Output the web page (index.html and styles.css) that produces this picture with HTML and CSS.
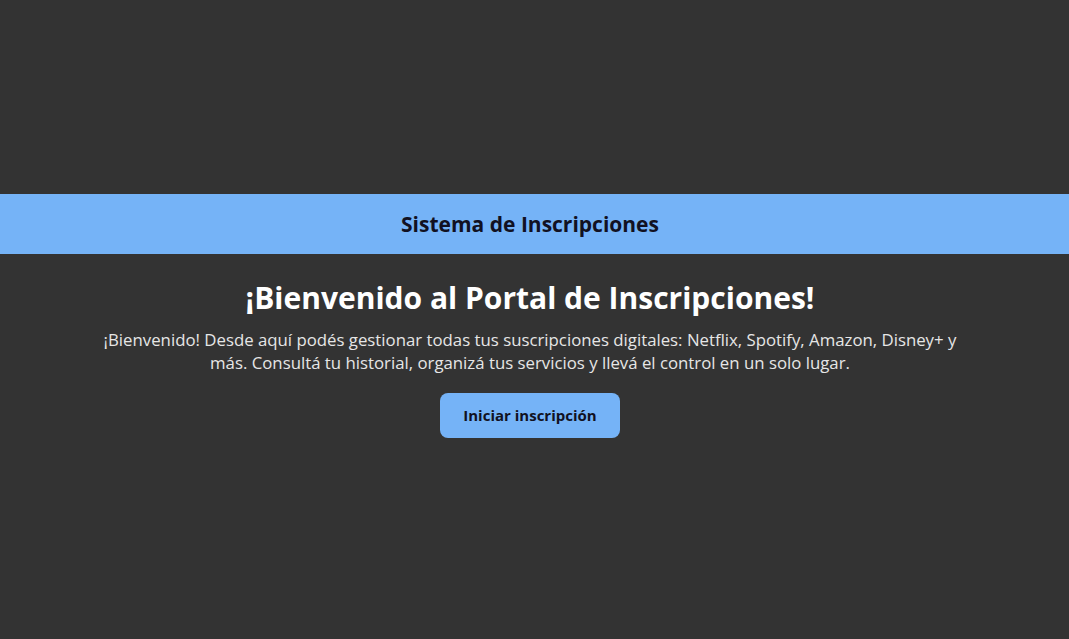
FILE: index.html
```html
<!DOCTYPE html>
<html lang="es">
<head>
<meta charset="utf-8">
<title>Sistema de Inscripciones</title>
<link rel="stylesheet" href="styles.css">
</head>
<body>
<div class="page">
  <header class="topbar">
    <h2 class="topbar-title">Sistema de Inscripciones</h2>
  </header>
  <main class="hero">
    <h1 class="hero-title">¡Bienvenido al Portal de Inscripciones!</h1>
    <p class="hero-text">¡Bienvenido! Desde aquí podés gestionar todas tus suscripciones digitales: Netflix, Spotify, Amazon, Disney+ y más. Consultá tu historial, organizá tus servicios y llevá el control en un solo lugar.</p>
    <button class="hero-button" type="button">Iniciar inscripción</button>
  </main>
</div>
</body>
</html>
```

FILE: styles.css
```css
html, body {
  margin: 0;
  padding: 0;
  height: 100%;
}
body {
  background: #333333;
  font-family: "Open Sans", "Noto Sans", sans-serif;
}
.page {
  min-height: 100%;
  box-sizing: border-box;
  padding-bottom: 8px;
  display: flex;
  flex-direction: column;
  justify-content: center;
}
.topbar {
  background: #75b3f7;
  height: 60px;
  box-sizing: border-box;
  padding-right: 9px;
  display: flex;
  align-items: center;
  justify-content: center;
}
.topbar-title {
  margin: 0;
  font-size: 21px;
  font-weight: 700;
  color: #111122;
}
.hero {
  display: flex;
  flex-direction: column;
  align-items: center;
  text-align: center;
  padding: 0 29px 0 20px;
}
.hero-title {
  margin: 24px 0 11px;
  font-size: 30px;
  font-weight: 700;
  color: #ffffff;
  line-height: 1.3;
}
.hero-text {
  margin: 0;
  max-width: 862px;
  font-size: 16.8px;
  line-height: 23px;
  color: #e6e6e6;
}
.hero-button {
  margin-top: 19px;
  width: 180px;
  height: 45px;
  border: none;
  border-radius: 8px;
  background: #75b3f7;
  color: #111122;
  font-family: inherit;
  font-size: 15px;
  font-weight: 700;
  cursor: pointer;
}
```
